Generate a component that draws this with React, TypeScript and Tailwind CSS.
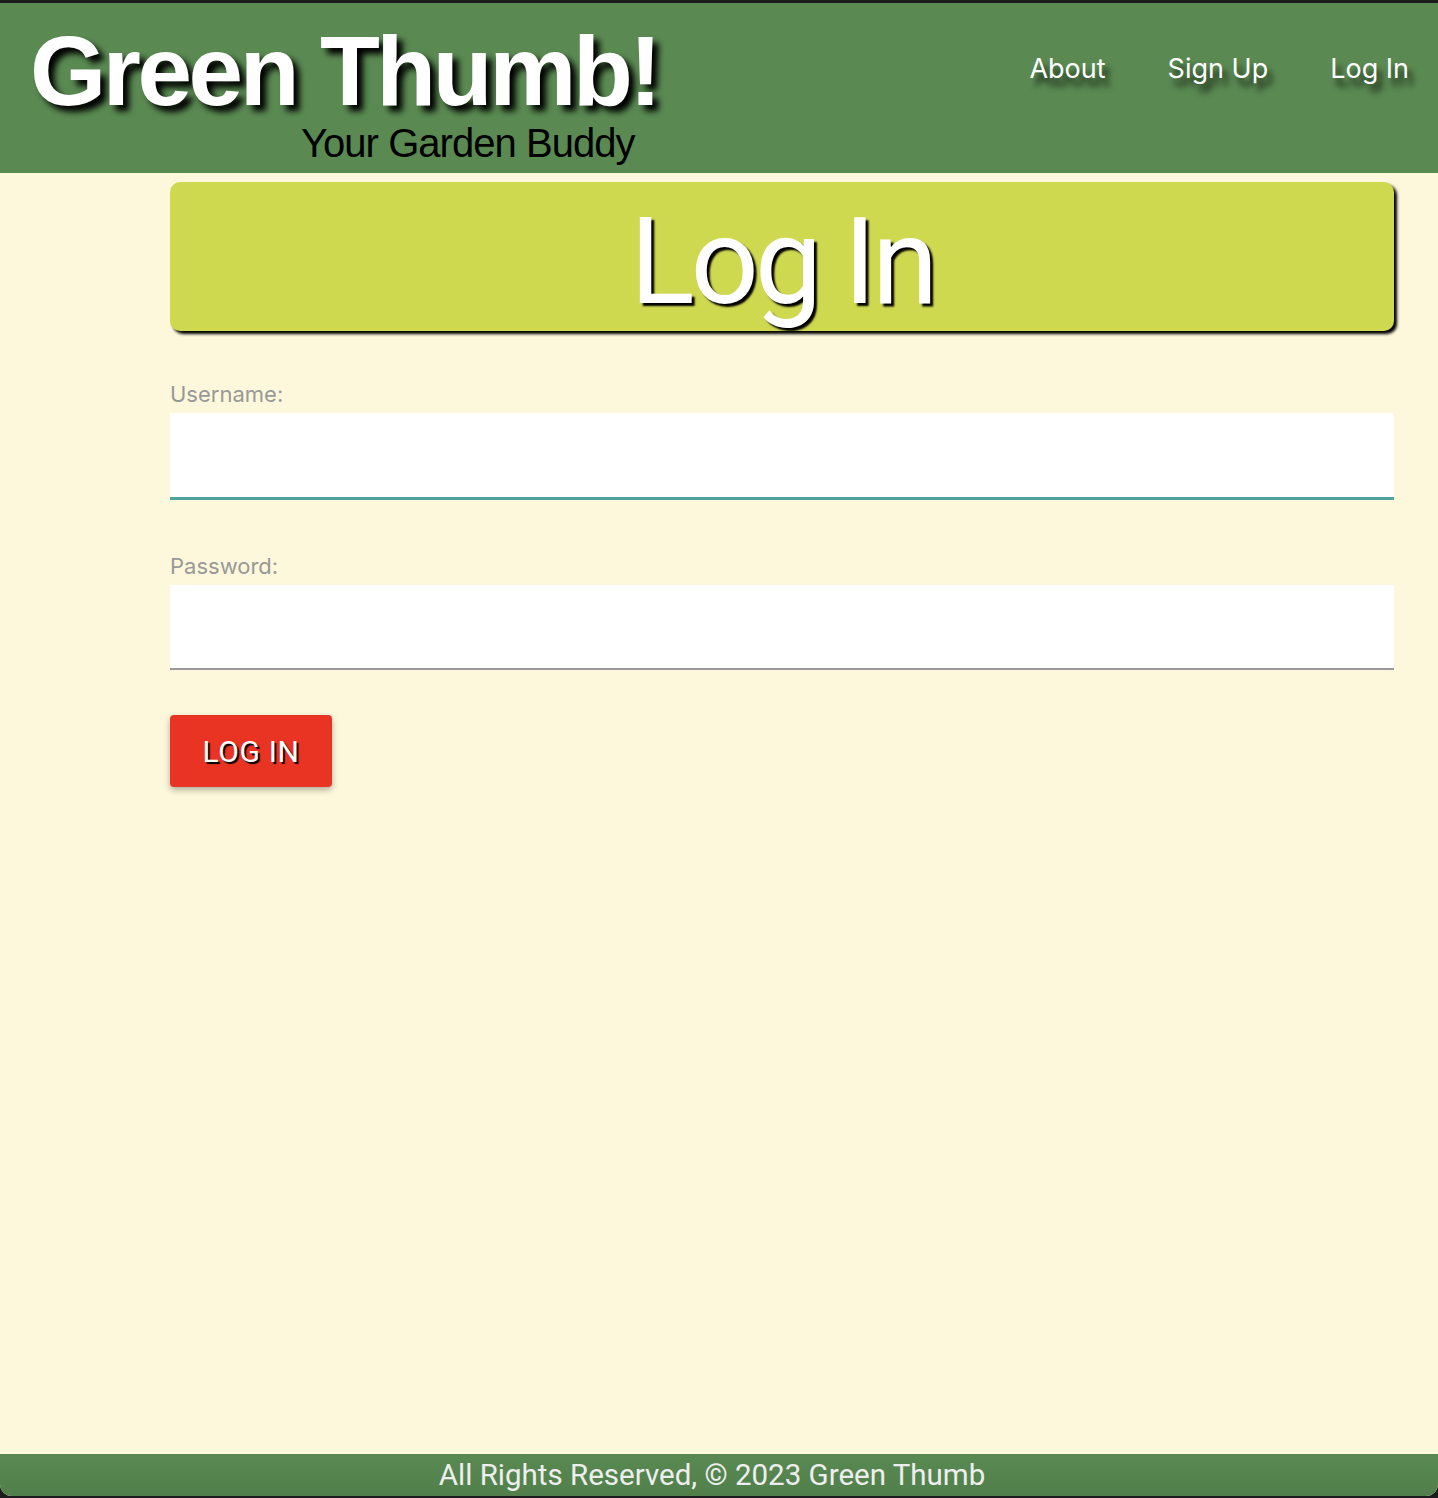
export default function App() {
  return (
    <div className="h-[1498px] bg-[#1c1c1e] pt-[3px]">
      <div className="flex h-[1493px] flex-col overflow-hidden rounded-b-[12px] bg-[#fdf8db]">
        {/* Header */}
        <header className="flex h-[170px] shrink-0 items-start justify-between bg-[#5a8a52]">
          <div className="pl-[30px] pt-[23px]">
            <h1 className="font-['Liberation_Sans',Arial,sans-serif] text-[98px] font-bold leading-[90px] tracking-[-0.035em] text-white [text-shadow:6px_6px_6px_#000]">
              Green Thumb!
            </h1>
            <p className="ml-[271px] mt-[7px] font-['Liberation_Sans',Arial,sans-serif] text-[40px] leading-[40px] tracking-[-0.024em] text-black">
              Your Garden Buddy
            </p>
          </div>
          <nav className="mt-[46px] flex gap-[62px] pr-[29px] font-['Inter',sans-serif] text-[27px] text-white">
            {['About', 'Sign Up', 'Log In'].map((link) => (
              <a key={link} href="#" className="[text-shadow:5px_8px_6px_rgba(0,0,0,0.8)]">
                {link}
              </a>
            ))}
          </nav>
        </header>

        {/* Main */}
        <main className="flex-1 pl-[170px] pr-[44px] pt-[9px]">
          <div className="flex h-[149px] items-center justify-center rounded-[10px] bg-[#cfd950] pt-[10px] shadow-[3px_3px_3px_#000]">
            <h2 className="font-['Roboto',sans-serif] text-[120px] leading-none tracking-[-0.035em] text-white [text-shadow:3px_3px_2px_#000]">
              Log In
            </h2>
          </div>

          <form className="mt-[51px] font-['Inter',sans-serif]">
            <label className="block text-[22px] leading-[24px] text-[#999]">Username:</label>
            <input
              type="text"
              className="mt-[7px] block h-[87px] w-full border-0 border-b-[3px] border-[#4fa39a] bg-white px-4 outline-none"
            />

            <label className="mt-[54px] block text-[22px] leading-[24px] text-[#999]">Password:</label>
            <input
              type="password"
              className="mt-[7px] block h-[85px] w-full border-0 border-b-2 border-[#9a9a9a] bg-white px-4 outline-none"
            />

            <button
              type="button"
              className="mt-[45px] flex h-[72px] w-[162px] items-center justify-center rounded-[4px] bg-[#e93424] font-['Roboto',sans-serif] text-[30px] tracking-[0.02em] text-white shadow-[0_3px_6px_rgba(0,0,0,0.3)] [text-shadow:2px_2px_1px_#000]"
            >
              LOG IN
            </button>
          </form>
        </main>

        {/* Footer */}
        <footer className="h-[42px] shrink-0 bg-gradient-to-b from-[#5a8a52] to-[#507f4b] pr-[14px] text-center font-['Roboto',sans-serif] text-[29.5px] leading-[42px] text-[#eee]">
          All Rights Reserved, © 2023 Green Thumb
        </footer>
      </div>
    </div>
  );
}
